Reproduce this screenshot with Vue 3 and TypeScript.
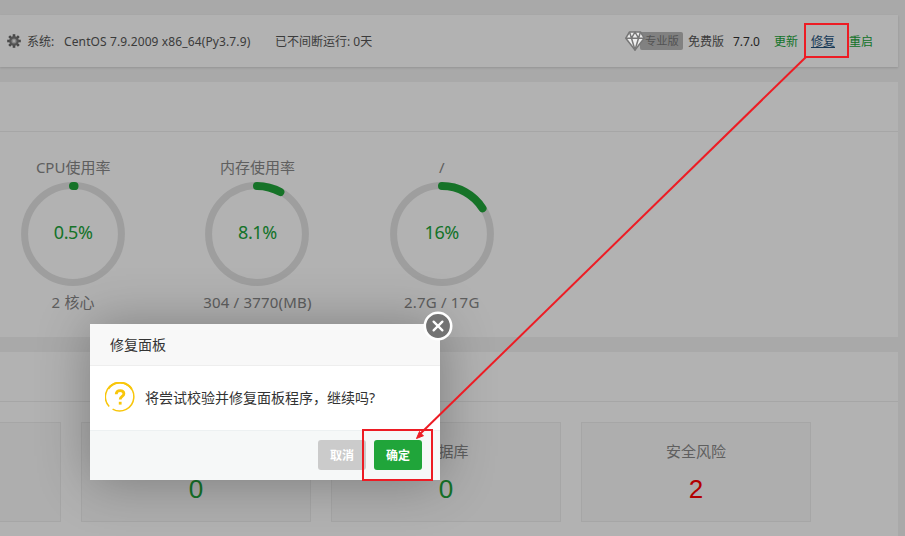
<script setup lang="ts">
interface Gauge {
  title: string
  percent: number
  label: string
  detail: string
}
interface Stat {
  title: string
  value: string
  danger?: boolean
}

const gauges: Gauge[] = [
  { title: 'CPU使用率', percent: 0.5, label: '0.5%', detail: '2 核心' },
  { title: '内存使用率', percent: 8.1, label: '8.1%', detail: '304 / 3770(MB)' },
  { title: '/', percent: 16, label: '16%', detail: '2.7G / 17G' },
]
const stats: Stat[] = [
  { title: '', value: '' },
  { title: 'FTP', value: '0' },
  { title: '数据库', value: '0' },
  { title: '安全风险', value: '2', danger: true },
]

const teeth = [0, 45, 90, 135, 180, 225, 270, 315]

function arc(percent: number): string {
  const angle = (percent / 100) * Math.PI * 2
  const x = 52 + 48 * Math.sin(angle)
  const y = 52 - 48 * Math.cos(angle)
  return `M52 4A48 48 0 0 1 ${x.toFixed(2)} ${y.toFixed(2)}`
}
</script>

<template>
  <div class="screen">
    <div class="page">
      <header class="bar">
        <svg class="gear" width="14" height="14" viewBox="0 0 14 14">
          <rect v-for="t in teeth" :key="t" x="5.7" y="0.2" width="2.6" height="3.4" fill="#666" :transform="`rotate(${t} 7 7)`" />
          <circle cx="7" cy="7" r="3.7" fill="#bbb" stroke="#777" stroke-width="2.2" />
          <circle cx="7" cy="7" r="1.4" fill="#eee" />
        </svg>
        <span class="sys">系统:</span>
        <span class="os">CentOS 7.9.2009 x86_64(Py3.7.9)</span>
        <span class="uptime">已不间断运行: 0天</span>
        <div class="version">
          <svg class="gem" width="20" height="20" viewBox="0 0 20 20" fill="none" stroke="#777" stroke-width="1.5" stroke-linejoin="round">
            <path fill="#eee" d="M4.5 1h11L19.2 7.2 10 19 .8 7.2z" />
            <path d="M.8 7.2h18.4M4.5 1l2 6.2L10 1l3.5 6.2 2-6.2M6.5 7.2 10 19l3.5-11.8" />
          </svg>
          <span class="pro">专业版</span>
          <span class="free">免费版</span>
          <span class="num">7.7.0</span>
          <a class="link update">更新</a>
          <a class="link repair">修复</a>
          <a class="link">重启</a>
        </div>
      </header>

      <section class="card status">
        <div class="card-head"></div>
        <div class="gauges">
          <div v-for="g in gauges" :key="g.title" class="gauge">
            <div class="gauge-title">{{ g.title }}</div>
            <div class="ring">
              <svg width="104" height="104" viewBox="0 0 104 104" fill="none">
                <circle cx="52" cy="52" r="48.4" stroke="#e3e3e3" stroke-width="7" />
                <path :d="arc(g.percent)" stroke="#20a53a" stroke-width="8" stroke-linecap="round" />
              </svg>
              <span class="ring-label">{{ g.label }}</span>
            </div>
            <div class="gauge-detail">{{ g.detail }}</div>
          </div>
        </div>
      </section>

      <section class="card overview">
        <div class="card-head"></div>
        <div class="stats">
          <div v-for="(s, i) in stats" :key="i" class="stat">
            <div class="stat-title">{{ s.title }}</div>
            <div class="stat-value" :class="{ danger: s.danger }">{{ s.value }}</div>
          </div>
        </div>
      </section>
    </div>

    <div class="shade"></div>

    <div class="dialog">
      <div class="dialog-title">修复面板</div>
      <div class="dialog-body">
        <svg width="30" height="30" viewBox="0 0 30 30" fill="none" stroke="#f8c60a">
          <path d="M4.2 24.4A14.2 14.2 0 1 1 7.6 27.1" stroke-width="1.5" />
          <path d="M3.2 7A14.2 14.2 0 0 1 26.8 7" stroke-width="2" />
          <path d="M11.2 12.3c0-2.4 1.5-3.7 3.9-3.7s3.8 1.3 3.8 3.2c0 2.6-3.7 2.6-3.7 5.6" stroke-width="2.8" />
          <path d="M15.2 19.8v2.8" stroke-width="2.8" />
        </svg>
        <span class="message">将尝试校验并修复面板程序，继续吗?</span>
      </div>
      <div class="dialog-foot">
        <button class="btn cancel">取消</button>
        <button class="btn ok">确定</button>
      </div>
      <svg class="close" width="30" height="30" viewBox="0 0 30 30">
        <circle cx="15" cy="15" r="13.2" fill="#737373" stroke="#fff" stroke-width="2.6" />
        <path d="M10.6 10.6l8.8 8.8M19.4 10.6l-8.8 8.8" stroke="#fff" stroke-width="2.3" stroke-linecap="round" />
      </svg>
    </div>

    <svg class="marks" width="905" height="536" viewBox="0 0 905 536" fill="none" stroke="#ed1c24" stroke-width="2">
      <rect x="805" y="24" width="43" height="33" />
      <rect x="363" y="430" width="69" height="50" />
      <path d="M806 57 420 434" />
      <path d="M416.5 438.5l3-7 1.6 2.3 2.4 1.9z" fill="#ed1c24" stroke-width="1" />
    </svg>
  </div>
</template>

<style>
body {
  overflow: hidden;
}
</style>

<style scoped>
.screen {
  position: relative;
  width: 905px;
  height: 536px;
  overflow: hidden;
  background: #f2f2f2;
  font-family: "Noto Sans", "Noto Sans CJK SC", sans-serif;
  font-size: 12px;
  color: #555;
}
.page {
  display: flex;
  flex-direction: column;
  gap: 15px;
  padding: 15px 7px 0 0;
}
.bar {
  display: flex;
  align-items: center;
  box-sizing: border-box;
  height: 52px;
  padding: 0 25px 0 7px;
  background: #fff;
  box-shadow: 0 1px 2px rgba(0, 0, 0, 0.13);
  white-space: nowrap;
}
.gear {
  margin-right: 6px;
}
.sys {
  width: 37px;
}
.os {
  width: 211px;
  letter-spacing: 0.12px;
}
.version {
  display: flex;
  align-items: center;
  margin-left: auto;
}
.gem {
  position: relative;
  z-index: 1;
  margin-right: -4px;
}
.pro {
  width: 38px;
  height: 18px;
  padding-left: 5px;
  margin-left: -1px;
  margin-right: 5px;
  border-radius: 2px;
  background: #b9b9b9;
  color: #777;
  font-size: 11.3px;
  line-height: 18px;
}
.free {
  width: 45px;
}
.num {
  width: 41px;
  color: #333;
}
.link {
  color: #20a53a;
}
.update {
  margin-right: 13px;
}
.repair {
  margin-right: 14px;
  color: #23527c;
  text-decoration: underline;
}
.card {
  background: #fff;
}
.card-head {
  box-sizing: border-box;
  height: 50px;
  border-bottom: 1px solid #eee;
}
.status {
  height: 255px;
}
.gauges {
  display: flex;
  padding-top: 25px;
  margin-left: -19px;
}
.gauge {
  display: flex;
  flex-direction: column;
  align-items: center;
  width: 184.3px;
  color: #888;
  font-size: 15px;
}
.gauge-title {
  height: 25px;
  line-height: 20px;
}
.ring {
  display: grid;
  place-items: center;
  height: 104px;
}
.ring svg,
.ring-label {
  grid-area: 1 / 1;
}
.ring-label {
  margin-top: -5px;
  color: #20a53a;
  font-size: 18px;
  letter-spacing: -0.4px;
}
.gauge-detail {
  margin-top: 5px;
  letter-spacing: 0.2px;
  line-height: 22px;
}
.overview {
  height: 200px;
}
.stats {
  display: flex;
  gap: 20px;
  padding-top: 20px;
  margin-left: -169px;
}
.stat {
  box-sizing: border-box;
  flex: 0 0 230px;
  height: 100px;
  padding-top: 17px;
  border: 1px solid #eee;
  background: #f9f9f9;
  text-align: center;
}
.stat-title {
  height: 22px;
  color: #888;
  font-size: 15px;
  line-height: 22px;
}
.stat-value {
  margin-top: 8px;
  color: #20a53a;
  font-family: "Liberation Sans", sans-serif;
  font-size: 26px;
  line-height: 38px;
}
.danger {
  color: #f00;
}
.shade {
  position: absolute;
  inset: 0;
  background: rgba(0, 0, 0, 0.3);
}
.dialog {
  position: absolute;
  left: 90px;
  top: 324px;
  width: 350px;
  height: 156px;
  background: #fff;
  box-shadow: 1px 1px 50px rgba(0, 0, 0, 0.3);
  color: #333;
  font-size: 14px;
}
.dialog-title {
  box-sizing: border-box;
  height: 42px;
  padding-left: 20px;
  border-bottom: 1px solid #eee;
  background: #f8f8f8;
  line-height: 42px;
}
.dialog-body {
  display: flex;
  align-items: center;
  gap: 10px;
  box-sizing: border-box;
  height: 64px;
  padding: 0 15px 2px;
  white-space: nowrap;
}
.dialog-foot {
  display: flex;
  justify-content: flex-end;
  gap: 8px;
  box-sizing: border-box;
  height: 50px;
  padding: 9px 18px 0 0;
  border-top: 1px solid #edf1f2;
  background: #f6f8f8;
}
.btn {
  width: 48px;
  height: 30px;
  padding: 0;
  border: 0;
  border-radius: 3px;
  color: #fff;
  font: bold 12px/30px "Noto Sans CJK SC", sans-serif;
}
.cancel {
  background: #cbcbcb;
}
.ok {
  background: #20a53a;
}
.close {
  position: absolute;
  left: 333px;
  top: -13px;
}
.marks {
  position: absolute;
  inset: 0;
}
</style>
